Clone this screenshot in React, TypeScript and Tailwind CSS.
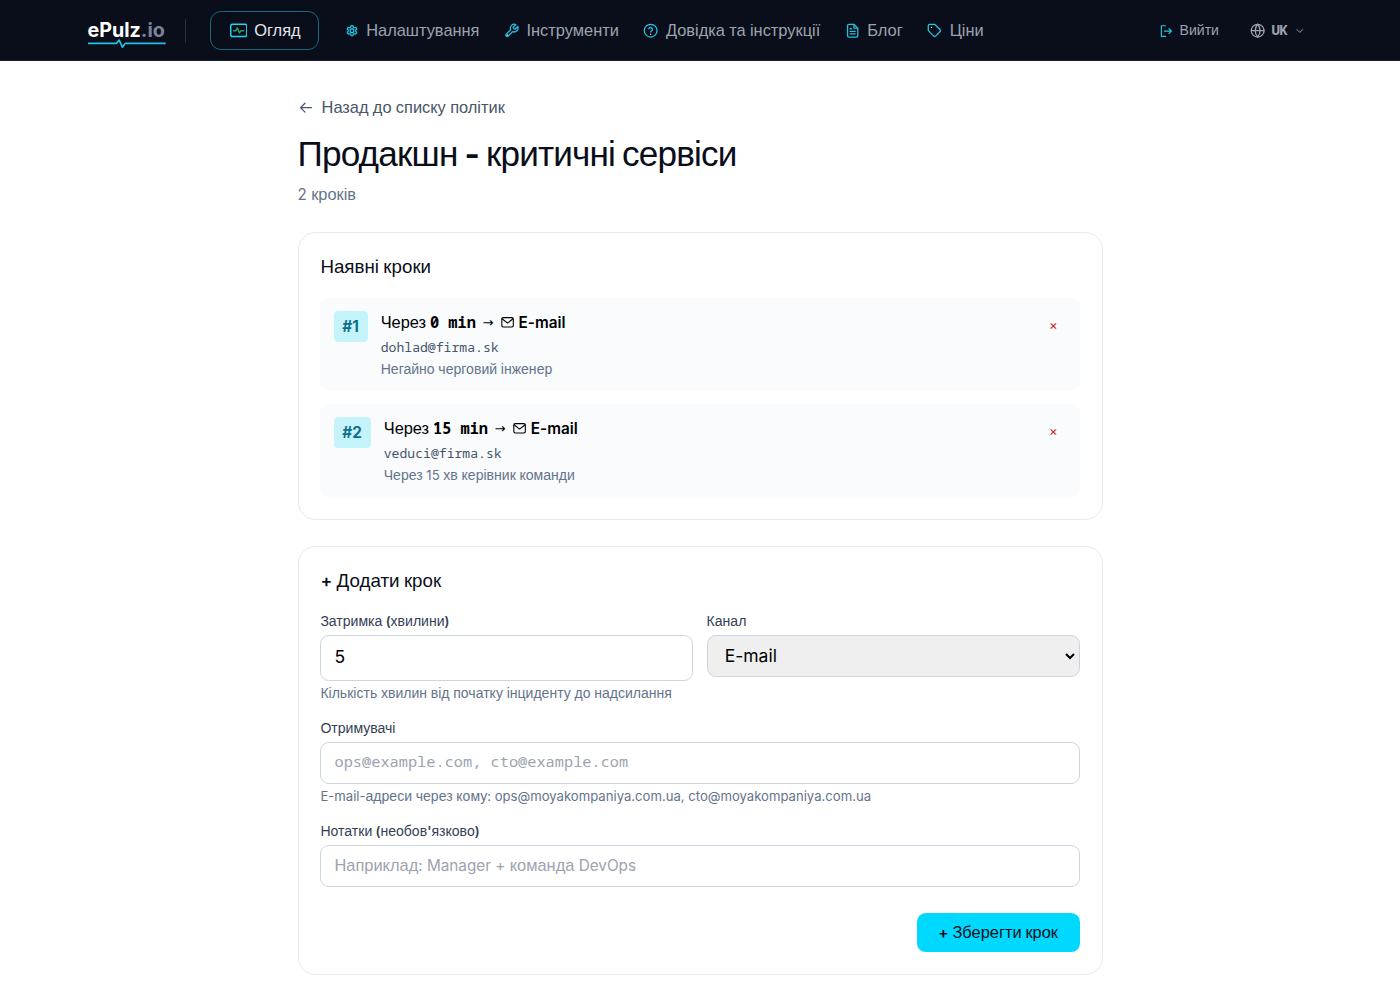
import React from 'react';
import { clsx } from 'clsx';

// =======================================================
// INTERFACES
// =======================================================

interface NavItem {
  id: string;
  label: string;
  icon: React.ReactNode;
}

interface Step {
  id: number;
  delay: string;
  email: string;
  note: string;
}

// =======================================================
// DATA
// =======================================================

const steps: Step[] = [
  { id: 1, delay: '0 min', email: 'dohlad@firma.sk', note: 'Негайно черговий інженер' },
  { id: 2, delay: '15 min', email: 'veduci@firma.sk', note: 'Через 15 хв керівник команди' },
];

const MONO = "font-['Noto_Sans_Mono','DejaVu_Sans_Mono',monospace]";

// =======================================================
// TEXT AND ICONS
// =======================================================

// Cyrillic words use the fallback face, a little larger to match Inter
const Mixed: React.FC<{ children: string }> = ({ children }) => (
  <>
    {children.split(/([\u0400-\u04FF]+)/).map((part, i) =>
      i % 2 === 1 ? (
        <span key={i} className="font-['Liberation_Sans',Arial,sans-serif] text-[1.0712em] leading-none font-normal">
          {part}
        </span>
      ) : part
    )}
  </>
);

const Icon: React.FC<{ className?: string; children: React.ReactNode }> = ({ className, children }) => (
  <svg
    viewBox="0 0 24 24"
    fill="none"
    stroke="currentColor"
    strokeWidth={2}
    strokeLinecap="round"
    strokeLinejoin="round"
    className={clsx('shrink-0', className ?? 'size-3.5')}
  >
    {children}
  </svg>
);

const navItems: NavItem[] = [
  {
    id: 'settings',
    label: 'Налаштування',
    icon: (
      <Icon>
        <circle cx="12.5" cy="12" r="3" />
        <path d="M11 4.2h3l.5 2.2 1.9 1.1 2.2-.7 1.5 2.6-1.7 1.5v2.2l1.700 1.500-1.500 2.600-2.200-.7-1.900 1.100-.5 2.200h-3l-.5-2.200-1.900-1.100-2.200.7-1.500-2.600 1.700-1.500v-2.200L4.900 9.400l1.500-2.600 2.200.7L10.500 6.400z" />
      </Icon>
    ),
  },
  {
    id: 'tools',
    label: 'Інструменти',
    icon: (
      <Icon>
        <path d="M14.7 6.3a1 1 0 0 0 0 1.4l1.6 1.6a1 1 0 0 0 1.4 0l3.77-3.77a6 6 0 0 1-7.94 7.94l-6.91 6.91a2.12 2.12 0 0 1-3-3l6.91-6.91a6 6 0 0 1 7.94-7.94l-3.76 3.76z" />
        <path d="M5.2 18.8h.01" stroke="#ffffff" />
      </Icon>
    ),
  },
  {
    id: 'help',
    label: 'Довідка та інструкції',
    icon: (
      <Icon>
        <circle cx="12" cy="12" r="10" />
        <path d="M9.1 9a3 3 0 0 1 5.8 1c0 2-2.9 2.6-2.9 4" />
        <path d="M12 17.5h.01" stroke="#ffffff" />
      </Icon>
    ),
  },
  {
    id: 'blog',
    label: 'Блог',
    icon: (
      <Icon>
        <path d="M14 2H6a2 2 0 0 0-2 2v16a2 2 0 0 0 2 2h12a2 2 0 0 0 2-2V8z" />
        <path d="M14 2v6h6M8 9h2M8 13h8M8 17h8" />
      </Icon>
    ),
  },
  {
    id: 'pricing',
    label: 'Ціни',
    icon: (
      <Icon>
        <path d="M20.59 13.41l-7.17 7.17a2 2 0 0 1-2.83 0L2 12V4a2 2 0 0 1 2-2h8l8.59 8.59a2 2 0 0 1 0 2.82z" />
        <path d="M7 7h.01" stroke="#ffffff" />
      </Icon>
    ),
  },
];

// =======================================================
// HEADER
// =======================================================

const Header: React.FC = () => (
  <header className="h-14 border-b border-[#1a1a2a] bg-[#0a0e1a] text-[#9ca3af]">
    <div className="mx-auto flex h-full max-w-6xl items-center px-4 pt-px">
      <a href="#" className="relative w-[71px] text-[18px] leading-none font-bold text-white">
        ePulz<span className="text-[#7c829c]">.io</span>
        <svg viewBox="0 0 71 8" className="absolute top-[17px] left-0 h-2 w-[71px] overflow-visible" fill="none" stroke="#22c3e6" strokeWidth="1.5" strokeLinejoin="round">
          <path d="M0 4h26l2.5-3 3 6.5L34 4h37" />
        </svg>
      </a>
      <span className="ml-[18px] h-[22px] w-px bg-[#2a2e3c]" />
      <nav className="ml-[22px] flex items-center text-sm">
        <a href="#" className="flex h-9 w-[100px] items-center gap-[6.5px] rounded-[10px] border border-[#15697d] pl-[17px] text-[#e5e7eb]">
          <Icon className="size-4 text-[#22d3ee]">
            <rect x="1" y="3" width="22" height="17" rx="2.5" />
            <path d="M5 12h3l2-4 3 7 2-3h4" stroke="#22a06b" />
          </Icon>
          <span className="pt-px"><Mixed>Огляд</Mixed></span>
        </a>
        <div className="ml-[22.3px] flex gap-[22.5px]">
          {navItems.map((item) => (
            <a key={item.id} href="#" className="flex items-center gap-[6.5px] whitespace-nowrap">
              <span className="text-[#22c3e0]">{item.icon}</span>
              <span className="pt-px"><Mixed>{item.label}</Mixed></span>
            </a>
          ))}
        </div>
      </nav>
      <div className="ml-auto flex items-center text-xs">
        <a href="#" className="flex items-center gap-1.5">
          <Icon className="size-[13px] text-[#22c3e0]">
            <path d="M11 3H4v18h7M9 12h12M17 8l4 4-4 4" />
          </Icon>
          <span><Mixed>Вийти</Mixed></span>
        </a>
        <button className="ml-7 flex items-center pr-2">
          <Icon className="size-[14px]">
            <circle cx="12" cy="12" r="10" />
            <path d="M2 12h20M12 2c5 5.5 5 14.5 0 20M12 2c-5 5.5-5 14.5 0 20" />
          </Icon>
          <span className={clsx(MONO, 'ml-1.5 text-[13px] font-bold tracking-[-0.04em]')}>UK</span>
          <Icon className="ml-2 size-[7px]">
            <path d="M3 8l9 9 9-9" strokeWidth="3" />
          </Icon>
        </button>
      </div>
    </div>
  </header>
);

// =======================================================
// STEPS
// =======================================================

const StepRow: React.FC<{ step: Step }> = ({ step }) => (
  <li className="flex items-start gap-3 rounded-lg bg-[#f9fbfd] p-3">
    <span className="rounded bg-[#c4f3fc] px-2 pt-[4.5px] pb-[3.5px] text-sm font-bold text-[#0e6f8a]">#{step.id}</span>
    <div className="h-[61px] flex-1">
      <p className="flex h-[21px] items-center text-sm text-black">
        <span><Mixed>Через</Mixed></span>
        <strong className={clsx(MONO, 'ml-[3.5px]')}>{step.delay}</strong>
        <span className="mr-[7px] ml-1.5 font-['DejaVu_Sans',sans-serif] text-xs">→</span>
        <Icon className="mr-1 size-3">
          <rect x="1.5" y="3" width="21" height="17" rx="2.5" />
          <path d="M2 5l10 8 10-8" />
        </Icon>
        <strong className="font-semibold">E-mail</strong>
      </p>
      <p className={clsx(MONO, 'mt-[3.5px] text-xs leading-[18px] text-[#475569]')}>{step.email}</p>
      <p className="mt-0.5 text-xs leading-[18px] text-[#64748b]">
        <Mixed>{step.note}</Mixed>
      </p>
    </div>
    <button className="px-2 pt-[5.5px] text-xs text-[#c81e1e]">×</button>
  </li>
);

const StepList: React.FC = () => (
  <section className="mt-6 rounded-2xl border border-[#e6eaee] bg-white p-5">
    <h2 className="mb-[16.5px] h-[23px] text-base leading-[22px] font-semibold text-[#0a0e1a]">
      <Mixed>Наявні кроки</Mixed>
    </h2>
    <ul className="space-y-3">
      {steps.map((step) => (
        <StepRow key={step.id} step={step} />
      ))}
    </ul>
  </section>
);

// =======================================================
// FORM
// =======================================================

const labelClass = 'mb-1 block h-4 text-xs font-semibold text-[#334155]';
const hintClass = 'mt-1 h-4 text-xs text-[#64748b]';
const fieldClass = 'block w-full rounded-lg border border-[#cbd5e1] px-3 placeholder:text-[#9ca3af]';

const StepForm: React.FC = () => (
  <section className="mt-[24.3px] rounded-2xl border border-[#e6eaee] bg-white p-5">
    <h2 className="mb-[17px] h-[23px] text-base leading-[22px] font-semibold text-[#0a0e1a]">
      <Mixed>+ Додати крок</Mixed>
    </h2>
    <form className="flex flex-col gap-4">
      <div className="grid grid-cols-2 gap-3">
        <div>
          <label className={labelClass}><Mixed>Затримка (хвилини)</Mixed></label>
          <input className={clsx(fieldClass, 'h-[42px] pb-0.5 text-base')} defaultValue="5" />
          <p className={hintClass}>
            <Mixed>Кількість хвилин від початку інциденту до надсилання</Mixed>
          </p>
        </div>
        <div>
          <label className={labelClass}><Mixed>Канал</Mixed></label>
          <select className={clsx(fieldClass, 'h-[38px] bg-[#efefef] pb-px text-base text-black')}>
            <option>E-mail</option>
          </select>
        </div>
      </div>
      <div>
        <label className={labelClass}><Mixed>Отримувачі</Mixed></label>
        <input className={clsx(fieldClass, MONO, 'h-[38px] pb-[3px] text-sm')} placeholder="ops@example.com, cto@example.com" />
        <p className={hintClass}>
          <Mixed>E-mail-адреси через кому: ops@moyakompaniya.com.ua, cto@moyakompaniya.com.ua</Mixed>
        </p>
      </div>
      <div>
        <label className={labelClass}><Mixed>Нотатки (необов'язково)</Mixed></label>
        <div className={clsx(fieldClass, 'flex h-[38px] items-center pt-px text-sm text-[#9ca3af]')}>
          <span><Mixed>Наприклад: Manager + команда DevOps</Mixed></span>
        </div>
      </div>
      <div className="mt-2 flex justify-end">
        <button type="button" className="h-9 w-[149px] rounded-lg bg-[#00d9ff] text-sm font-semibold text-[#0a0e1a]">
          <Mixed>+ Зберегти крок</Mixed>
        </button>
      </div>
    </form>
  </section>
);

// =======================================================
// PAGE
// =======================================================

export default function App() {
  return (
    <div className="h-[899px] overflow-hidden bg-white font-['Inter',sans-serif] [zoom:1.09375]">
      <Header />
      <main className="mx-auto max-w-3xl px-4 pt-8">
        <a href="#" className="flex h-5 items-center gap-2 pt-px text-sm text-[#475569]">
          <Icon>
            <path d="M21 12H4M11 5l-7 7 7 7" />
          </Icon>
          <span><Mixed>Назад до списку політик</Mixed></span>
        </a>
        <h1 className="mt-[13.5px] h-10 text-[30px] leading-10 font-bold tracking-[-0.025em] text-[#0a0e1a]">
          <Mixed>Продакшн - критичні сервіси</Mixed>
        </h1>
        <p className="mt-1 h-[22.5px] text-sm leading-[26px] text-[#64748b]">
          <Mixed>2 кроків</Mixed>
        </p>
        <StepList />
        <StepForm />
      </main>
    </div>
  );
}
